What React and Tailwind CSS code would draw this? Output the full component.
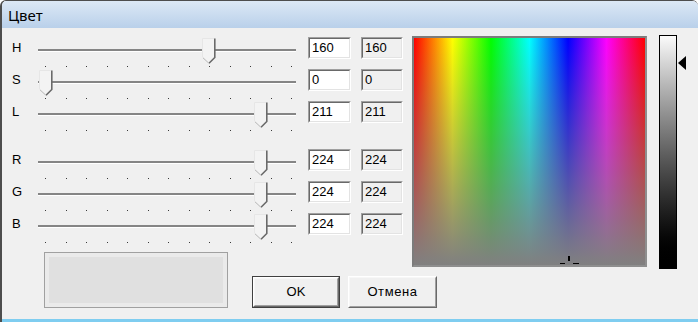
import React from 'react';

const sliders = [
  { label: 'H', value: 160, max: 240 },
  { label: 'S', value: 0, max: 240 },
  { label: 'L', value: 211, max: 240 },
  { label: 'R', value: 224, max: 255, gap: true },
  { label: 'G', value: 224, max: 255 },
  { label: 'B', value: 224, max: 255 },
];

function Thumb({ left }) {
  return (
    <svg width="14" height="26" viewBox="0 0 14 26" className="absolute top-[1px]" style={{ left }}>
      <polygon points="0.5,0.5 13,0.5 13,19.5 7,25.5 0.5,19.5" fill="#f3f3f3" />
      <polyline points="0.5,19.5 0.5,0.5 12.5,0.5" fill="none" stroke="#e6e6e6" strokeWidth="1" />
      <polyline points="12.8,0.5 12.8,19.5 7,25.3" fill="none" stroke="#6a6a6a" strokeWidth="1.6" />
      <polyline points="1,19.8 6.6,25" fill="none" stroke="#b5b5b5" strokeWidth="1" />
    </svg>
  );
}

function Sunken({ children, className }) {
  return (
    <div className="border border-t-[#a0a0a0] border-l-[#a0a0a0] border-r-white border-b-white">
      <div className={"border border-t-[#696969] border-l-[#696969] border-r-[#e3e3e3] border-b-[#e3e3e3] " + className}>
        {children}
      </div>
    </div>
  );
}

function SliderRow({ label, value, max, gap }) {
  const left = Math.round((value / max) * 245 + 0.5);
  return (
    <div className={"flex items-start h-[32px] " + (gap ? 'mt-[16px]' : '')}>
      <div className="w-[36px] pl-[10px] h-[22px] leading-[22px] text-[13px]">{label}</div>
      <div className="relative w-[258px] h-[32px]">
        <div className="absolute left-0 right-0 top-[12px] h-[3px] border-t-2 border-t-[#858585] border-b border-b-white" />
        <div className="absolute left-0 right-0 top-[29px] flex justify-between pl-[7px] pr-[4px]">
          {Array.from({ length: 13 }).map((_, i) => (
            <div key={i} className="w-px h-px bg-[#3a3a3a]" />
          ))}
        </div>
        <Thumb left={left} />
      </div>
      <div className="ml-[12px] w-[43px] h-[22px]">
        <Sunken className="h-[20px] bg-white pl-[2px] text-[13px] leading-[18px]">{value}</Sunken>
      </div>
      <div className="ml-[10px] w-[42px] h-[22px]">
        <Sunken className="h-[20px] bg-[#f0f0f0] pl-[2px] text-[13px] leading-[18px]">{value}</Sunken>
      </div>
    </div>
  );
}

function Button({ children, isDefault, className }) {
  return (
    <div className={(isDefault ? 'border border-[#404040] ' : '') + 'h-[32px] ' + className}>
      <div className="h-full border border-t-[#ffffff] border-l-[#ffffff] border-r-[#696969] border-b-[#696969]">
        <div className="h-full border border-t-[#f7f7f7] border-l-[#f7f7f7] border-r-[#a0a0a0] border-b-[#a0a0a0] flex items-center justify-center text-[13px] bg-[#f0f0f0]">
          {children}
        </div>
      </div>
    </div>
  );
}

export default function App() {
  return (
    <div className="w-[698px] h-[322px] overflow-hidden flex flex-col bg-[#f0f0f0] border-l-2 border-t border-[#4d4d4d] rounded-t-[6px] font-['Liberation_Sans',Arial,sans-serif] text-black">
      <div className="h-[27px] shrink-0 flex items-center pl-[6px] bg-gradient-to-b from-[#dce8f5] to-[#b9d0ea]">
        <span className="font-['Noto_Sans',sans-serif] text-[15px] leading-none pt-[2px]">Цвет</span>
      </div>

      <div className="flex-1 flex items-start pt-[8px]">
        <div className="w-[401px] shrink-0 pt-[1px] flex flex-col">
          {sliders.map((s) => (
            <SliderRow key={s.label} {...s} />
          ))}
          <div className="flex items-start mt-[7px] ml-[42px] w-max">
            <div className="w-[184px] h-[56px] border border-[#a0a0a0] p-[4px] bg-[#eaeaea]">
              <div className="w-full h-full bg-[#e0e0e0]" />
            </div>
            <Button isDefault className="ml-[24px] mt-[24px] w-[88px]">OK</Button>
            <Button className="ml-[8px] mt-[24px] w-[89px] tracking-[0.6px]">Отмена</Button>
          </div>
        </div>

        <div className="ml-[9px] flex items-start">
          <div className="relative w-[235px] h-[231px] border-2 border-t-[#7c7c7c] border-l-[#7c7c7c] border-r-[#8e8e8e] border-b-[#8e8e8e] overflow-hidden bg-[linear-gradient(to_bottom,rgba(128,128,128,0),#808080),linear-gradient(to_right,#ff0000,#ffff00,#00ff00,#00ffff,#0000ff,#ff00ff,#ff0000)]">
            <div className="absolute left-[154px] top-[218px] w-[2px] h-[5px] bg-black" />
            <div className="absolute left-[146px] top-[225px] w-[5px] h-[1px] bg-black" />
            <div className="absolute left-[159px] top-[225px] w-[6px] h-[1px] bg-black" />
          </div>
          <div className="relative ml-[12px] -mt-[1px]">
            <div className="w-[18px] h-[234px] border border-black bg-gradient-to-b from-[#fbfbfb] to-black" />
            <svg width="8" height="14" viewBox="0 0 8 14" className="absolute left-[19px] top-[21px]">
              <polygon points="0,7 8,0 8,14" fill="#000" />
            </svg>
          </div>
        </div>
      </div>

      <div className="h-[3px] shrink-0 bg-[#7fcdf0]" />
    </div>
  );
}
